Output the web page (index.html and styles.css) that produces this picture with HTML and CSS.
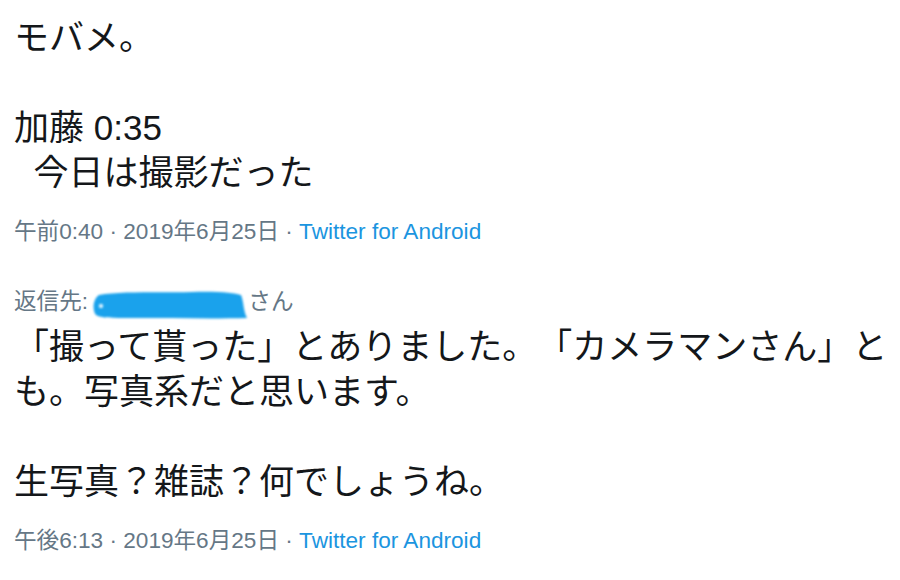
FILE: index.html
```html
<!DOCTYPE html>
<html lang="ja">
<head>
  <meta charset="UTF-8" />
  <meta name="viewport" content="width=device-width, initial-scale=1" />
  <title>ツイート</title>
  <link rel="stylesheet" href="styles.css">
</head>
<body>

  <div class="thread">
    <div class="tweet">
      <p class="tweet-text">モバメ。

加藤 0:35
  今日は撮影だった</p>
      <div class="meta">
        <span>午前0:40</span> · <span>2019年6月25日</span> · <a class="source" href="#">Twitter for Android</a>
      </div>
    </div>

    <div class="tweet reply">
      <div class="reply-to">
        返信先: <span class="hidden-user"><svg width="156" height="30" viewBox="0 0 156 30">
          <path d="M7 5 C 30 1, 70 3, 100 2 C 125 1, 143 3, 149 5 C 152 12, 151 20, 155 28 C 120 29, 80 28, 40 28 C 20 28, 8 28, 4 25 C 0 20, 1 9, 7 5 Z" fill="#1aa2ec"/>
          <circle cx="9" cy="16" r="2.2" fill="#d6f0ff"/>
        </svg></span>さん
      </div>
      <p class="tweet-text">「撮って貰った」とありました。「カメラマンさん」とも。写真系だと思います。

生写真？雑誌？何でしょうね。</p>
      <div class="meta">
        <span>午後6:13</span> · <span>2019年6月25日</span> · <a class="source" href="#">Twitter for Android</a>
      </div>
    </div>
  </div>

</body>
</html>
```

FILE: styles.css
```css
body {
  margin: 0;
  background: #fff;
  font-family: "Liberation Sans", "Noto Sans CJK JP", sans-serif;
  color: #14171a;
  text-spacing-trim: space-all;
}
.thread {
  padding: 15px 0 0 14px;
  width: 886px;
}
.tweet-text {
  margin: 0;
  font-size: 35px;
  line-height: 45px;
  white-space: pre-wrap;
  color: #14171a;
}
.meta {
  margin-top: 22px;
  font-size: 22.6px;
  line-height: 30px;
  color: #657786;
}
.source {
  color: #1b95e0;
  text-decoration: none;
}
.reply {
  margin-top: 40px;
}
.reply-to {
  font-size: 22.6px;
  line-height: 30px;
  color: #657786;
  margin-bottom: 7px;
}
.hidden-user {
  display: inline-block;
  width: 156px;
  height: 30px;
  vertical-align: top;
  margin: 3px 0 -3px -2px;
}
.hidden-user svg {
  display: block;
  filter: blur(1px);
}
```
